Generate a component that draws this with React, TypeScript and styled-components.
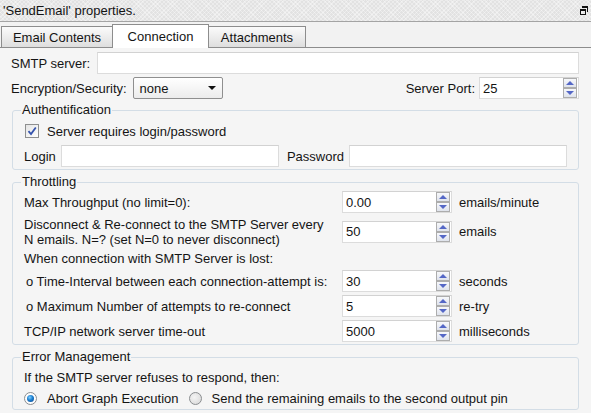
import React from "react"
import styled, { createGlobalStyle } from "styled-components"

const GlobalStyle = createGlobalStyle`
  html, body {
    margin: 0;
    padding: 0;
  }
  body {
    width: 591px;
    height: 413px;
    overflow: hidden;
    background: #f5f5f5;
    font-family: "Liberation Sans", Arial, sans-serif;
    font-size: 13px;
    color: #141414;
  }
`

const Panel = styled.div`
  width: 591px;
  height: 413px;
  display: flex;
  flex-direction: column;
  background: #f5f5f5;
`

const TitleBar = styled.div`
  height: 21px;
  display: flex;
  align-items: center;
  justify-content: space-between;
  padding: 0 3px 0 3px;
  border-bottom: 1px solid #a4a4a4;
  background-color: #e2e2e2;
  background-image:
    repeating-linear-gradient(45deg, rgba(255, 255, 255, 0.35) 0 1px, transparent 1px 3px),
    repeating-linear-gradient(-45deg, rgba(255, 255, 255, 0.35) 0 1px, transparent 1px 3px);
`

const TitleText = styled.span`
  line-height: 16px;
`

const TabStrip = styled.div`
  height: 25px;
  display: flex;
  align-items: flex-end;
  padding-left: 2px;
  border-bottom: 1px solid #8d8d8d;
  background: #f2f2f2;
`

const Tab = styled.div<{ $active?: boolean; $w: number }>`
  box-sizing: border-box;
  position: relative;
  z-index: ${p => (p.$active ? 1 : 0)};
  width: ${p => p.$w}px;
  height: ${p => (p.$active ? 24 : 21)}px;
  margin-left: -1px;
  margin-bottom: ${p => (p.$active ? -1 : 0)}px;
  display: flex;
  align-items: center;
  justify-content: center;
  padding-top: ${p => (p.$active ? 0 : 1)}px;
  border: 1px solid #8d8d8d;
  border-bottom: none;
  background: ${p => (p.$active ? "#ffffff" : "linear-gradient(#fbfbfb, #dedede)")};
`

const Content = styled.div`
  display: flex;
  flex-direction: column;
  padding: 4px 12px 0 11px;
`

const Row = styled.div<{ $mt?: number }>`
  display: flex;
  align-items: center;
  height: 22px;
  margin-top: ${p => p.$mt ?? 0}px;
`

const Label = styled.span<{ $gap?: number }>`
  white-space: nowrap;
  margin-right: ${p => p.$gap ?? 0}px;
`

const Spacer = styled.div`
  flex: 1;
`

const TextBox = styled.input`
  box-sizing: border-box;
  flex: 1;
  min-width: 0;
  height: 22px;
  padding: 0 3px;
  border: 1px solid #dcdcdc;
  border-top-color: #d2d2d2;
  background: #fff;
  font: inherit;
  color: inherit;
  outline: none;
`

const Select = styled.div`
  box-sizing: border-box;
  width: 90px;
  height: 22px;
  display: flex;
  align-items: center;
  justify-content: space-between;
  padding: 0 6px 0 6px;
  border: 1px solid #8f8f8f;
  border-radius: 2px;
  background: linear-gradient(#ffffff, #ececec);
`

const Arrow = styled.span`
  width: 0;
  height: 0;
  border-left: 4px solid transparent;
  border-right: 4px solid transparent;
  border-top: 4px solid #111;
`

const SpinBox = styled.div<{ $w: number }>`
  box-sizing: border-box;
  width: ${p => p.$w}px;
  height: 22px;
  display: flex;
  border: 1px solid #dcdcdc;
  border-top-color: #d2d2d2;
  background: #fff;
`

const SpinInput = styled.input`
  flex: 1;
  min-width: 0;
  border: none;
  padding: 0 3px;
  background: transparent;
  font: inherit;
  color: inherit;
  outline: none;
`

const SpinButtons = styled.div`
  width: 14px;
  display: flex;
  flex-direction: column;
  padding: 0 1px 0 0;
`

const SpinButton = styled.div<{ $down?: boolean }>`
  box-sizing: border-box;
  flex: 1;
  display: flex;
  align-items: center;
  justify-content: center;
  border: 1px solid #adadad;
  background: linear-gradient(#f7f8fb, #dfe3ec);
  &::after {
    content: "";
    width: 0;
    height: 0;
    border-left: 4px solid transparent;
    border-right: 4px solid transparent;
    ${p => (p.$down ? "border-top: 4px solid #5467c6;" : "border-bottom: 4px solid #5467c6;")}
  }
`

const Group = styled.fieldset<{ $mt?: number }>`
  margin: ${p => p.$mt ?? 4}px 0 0 1px;
  padding: 0 11px 2px 11px;
  min-width: 0;
  border: 1px solid #d3dde6;
  border-radius: 3px;
`

const Legend = styled.legend`
  margin-left: -3px;
  padding: 0 1px;
  line-height: 16px;
`

const CheckRow = styled.label`
  display: flex;
  align-items: center;
  height: 16px;
  margin-top: 5px;
  gap: 8px;
  padding-left: 1px;
`

const CheckBox = styled.span`
  box-sizing: border-box;
  width: 14px;
  height: 14px;
  display: flex;
  align-items: center;
  justify-content: center;
  border: 1px solid #8e8f8f;
  background: linear-gradient(135deg, #e4e4e4, #ffffff);
`

const LoginRow = styled.div`
  display: flex;
  align-items: center;
  height: 22px;
  margin-top: 6px;
  gap: 5px;
`

const PasswordLabel = styled.span`
  margin-left: 3px;
`

const ThrottleGrid = styled.div`
  display: grid;
  grid-template-columns: 318px 110px 1fr;
  grid-template-rows: 22px 31px 17px 22px 22px 22px;
  row-gap: 3px;
  align-items: center;
  padding-top: 1px;
`

const GridLabel = styled.span<{ $indent?: boolean; $wide?: boolean }>`
  line-height: 15px;
  padding-left: ${p => (p.$indent ? 2 : 0)}px;
  grid-column: ${p => (p.$wide ? "1 / 4" : "auto")};
`

const Unit = styled.span`
  padding-left: 7px;
`

const TextLine = styled.div<{ $mt: number }>`
  height: 16px;
  line-height: 16px;
  margin-top: ${p => p.$mt}px;
`

const RadioRow = styled.div`
  display: flex;
  align-items: center;
  height: 16px;
  margin-top: 4px;
  padding-bottom: 1px;
`

const RadioOption = styled.label`
  display: flex;
  align-items: center;
  gap: 10px;
  margin-right: 10px;
`

const RadioDot = styled.span<{ $on?: boolean }>`
  box-sizing: border-box;
  width: 13px;
  height: 13px;
  border-radius: 50%;
  border: 1px solid #8a8d90;
  display: flex;
  align-items: center;
  justify-content: center;
  background: ${p => (p.$on ? "#fdfdfd" : "radial-gradient(circle at 40% 40%, #f4f4f4, #d6d6d6)")};
  &::after {
    content: "";
    display: ${p => (p.$on ? "block" : "none")};
    width: 7px;
    height: 7px;
    border-radius: 50%;
    background: radial-gradient(circle at 40% 35%, #7fd0ff 0, #1c7fd0 45%, #0b3f86 100%);
  }
`

const RestoreIcon = () => (
  <svg width="8" height="9" viewBox="0 0 8 9" shapeRendering="crispEdges">
    <path d="M2 0h6v6h-1v-4h-5z" fill="#111" />
    <path d="M0 3h6v6h-6z M1 5v3h4v-3z" fill="#111" fillRule="evenodd" />
  </svg>
)

const CheckMark = () => (
  <svg width="10" height="10" viewBox="0 0 10 10">
    <path d="M1.5 5.2 L4 8 L8.8 1.5" stroke="#3553ad" strokeWidth="1.8" fill="none" />
  </svg>
)

const Spin: React.FC<{ value: string; w: number }> = ({ value, w }) => (
  <SpinBox $w={w}>
    <SpinInput defaultValue={value} />
    <SpinButtons>
      <SpinButton />
      <SpinButton $down />
    </SpinButtons>
  </SpinBox>
)

export default function App() {
  return (
    <Panel>
      <GlobalStyle />
      <TitleBar>
        <TitleText>'SendEmail' properties.</TitleText>
        <RestoreIcon />
      </TitleBar>
      <TabStrip>
        <Tab $w={112}>Email Contents</Tab>
        <Tab $w={97} $active>Connection</Tab>
        <Tab $w={98}>Attachments</Tab>
      </TabStrip>
      <Content>
        <Row>
          <Label $gap={7}>SMTP server:</Label>
          <TextBox defaultValue="" />
        </Row>
        <Row $mt={3}>
          <Label $gap={6}>Encryption/Security:</Label>
          <Select>
            <span>none</span>
            <Arrow />
          </Select>
          <Spacer />
          <Label $gap={4}>Server Port:</Label>
          <Spin value="25" w={100} />
        </Row>

        <Group $mt={3}>
          <Legend>Authentification</Legend>
          <CheckRow>
            <CheckBox>
              <CheckMark />
            </CheckBox>
            Server requires login/password
          </CheckRow>
          <LoginRow>
            <span>Login</span>
            <TextBox defaultValue="" />
            <PasswordLabel>Password</PasswordLabel>
            <TextBox defaultValue="" />
          </LoginRow>
        </Group>

        <Group>
          <Legend>Throttling</Legend>
          <ThrottleGrid>
            <GridLabel>Max Throughput (no limit=0):</GridLabel>
            <Spin value="0.00" w={110} />
            <Unit>emails/minute</Unit>

            <GridLabel>
              Disconnect &amp; Re-connect to the SMTP Server every
              <br />
              N emails. N=? (set N=0 to never disconnect)
            </GridLabel>
            <Spin value="50" w={110} />
            <Unit>emails</Unit>

            <GridLabel $wide>When connection with SMTP Server is lost:</GridLabel>

            <GridLabel $indent>o Time-Interval between each connection-attempt is:</GridLabel>
            <Spin value="30" w={110} />
            <Unit>seconds</Unit>

            <GridLabel $indent>o Maximum Number of attempts to re-connect</GridLabel>
            <Spin value="5" w={110} />
            <Unit>re-try</Unit>

            <GridLabel>TCP/IP network server time-out</GridLabel>
            <Spin value="5000" w={110} />
            <Unit>milliseconds</Unit>
          </ThrottleGrid>
        </Group>

        <Group>
          <Legend>Error Management</Legend>
          <TextLine $mt={5}>If the SMTP server refuses to respond, then:</TextLine>
          <RadioRow>
            <RadioOption>
              <RadioDot $on />
              Abort Graph Execution
            </RadioOption>
            <RadioOption>
              <RadioDot />
              Send the remaining emails to the second output pin
            </RadioOption>
          </RadioRow>
        </Group>
      </Content>
    </Panel>
  )
}
